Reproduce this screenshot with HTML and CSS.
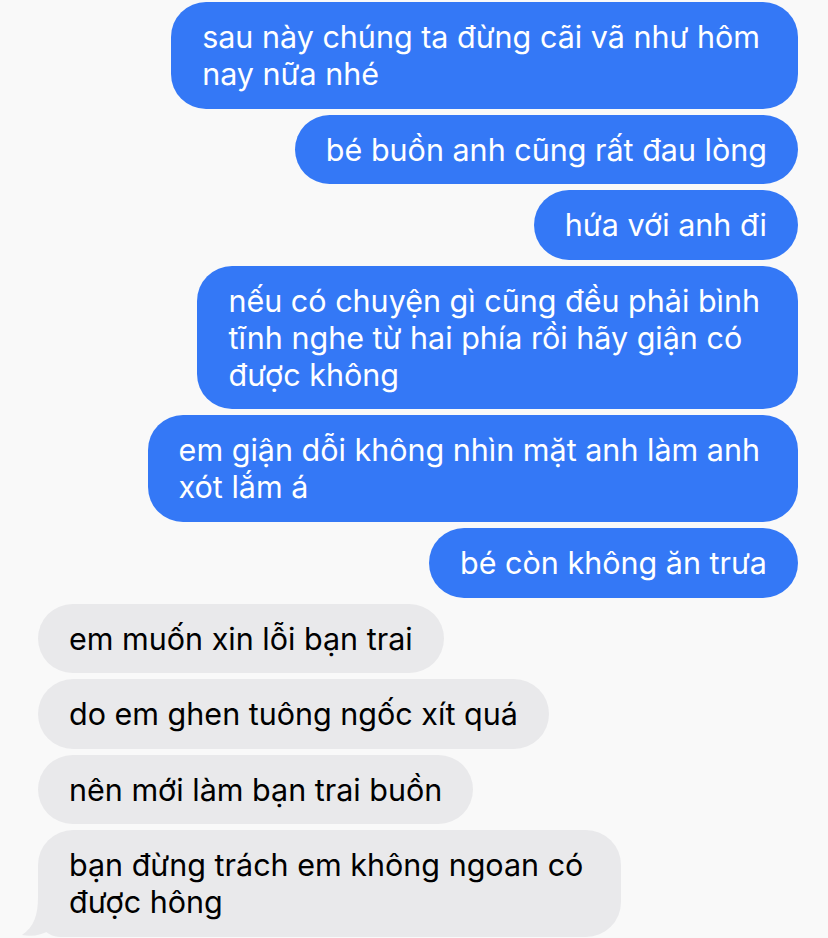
FILE: index.html
```html
<!DOCTYPE html>
<html lang="vi">
<head>
<meta charset="utf-8">
<link rel="stylesheet" href="styles.css">
</head>
<body>
<div class="chat">
  <div class="msg out multi">sau này chúng ta đừng cãi vã như hôm<br>nay nữa nhé</div>
  <div class="msg out">bé buồn anh cũng rất đau lòng</div>
  <div class="msg out">hứa với anh đi</div>
  <div class="msg out multi">nếu có chuyện gì cũng đều phải bình<br>tĩnh nghe từ hai phía rồi hãy giận có<br>được không</div>
  <div class="msg out multi">em giận dỗi không nhìn mặt anh làm anh<br>xót lắm á</div>
  <div class="msg out">bé còn không ăn trưa</div>
  <div class="msg in">em muốn xin lỗi bạn trai</div>
  <div class="msg in">do em ghen tuông ngốc xít quá</div>
  <div class="msg in">nên mới làm bạn trai buồn</div>
  <div class="msg in multi last">bạn đừng trách em không ngoan có<br>được hông<svg class="tail" width="30" height="40" viewBox="0 0 30 40"><path d="M18 0 C18 18 14 30 2 38 C12 40 22 38 30 33 L30 0 Z" fill="#e9e9eb"/></svg></div>
</div>
</body>
</html>
```
FILE: styles.css
```css
html, body {
  margin: 0;
  padding: 0;
  background: #f9f9f9;
}
body {
  width: 828px;
  height: 938px;
  overflow: hidden;
}
.chat {
  display: flex;
  flex-direction: column;
  gap: 6px;
  padding: 2px 30px 0 38px;
  font-family: Inter, "Noto Sans", sans-serif;
  font-size: 30.5px;
  line-height: 37px;
}
.msg {
  position: relative;
  padding: 16px 31px 16.6px;
  border-radius: 35px;
  white-space: nowrap;
}
.multi {
  padding-right: 38px;
}
.out {
  align-self: flex-end;
  background: #3478f6;
  color: #fff;
}
.in {
  align-self: flex-start;
  background: #e9e9eb;
  color: #000;
}
.last {
  border-bottom-left-radius: 22px;
}
.tail {
  position: absolute;
  left: -18px;
  bottom: 0;
}
```
